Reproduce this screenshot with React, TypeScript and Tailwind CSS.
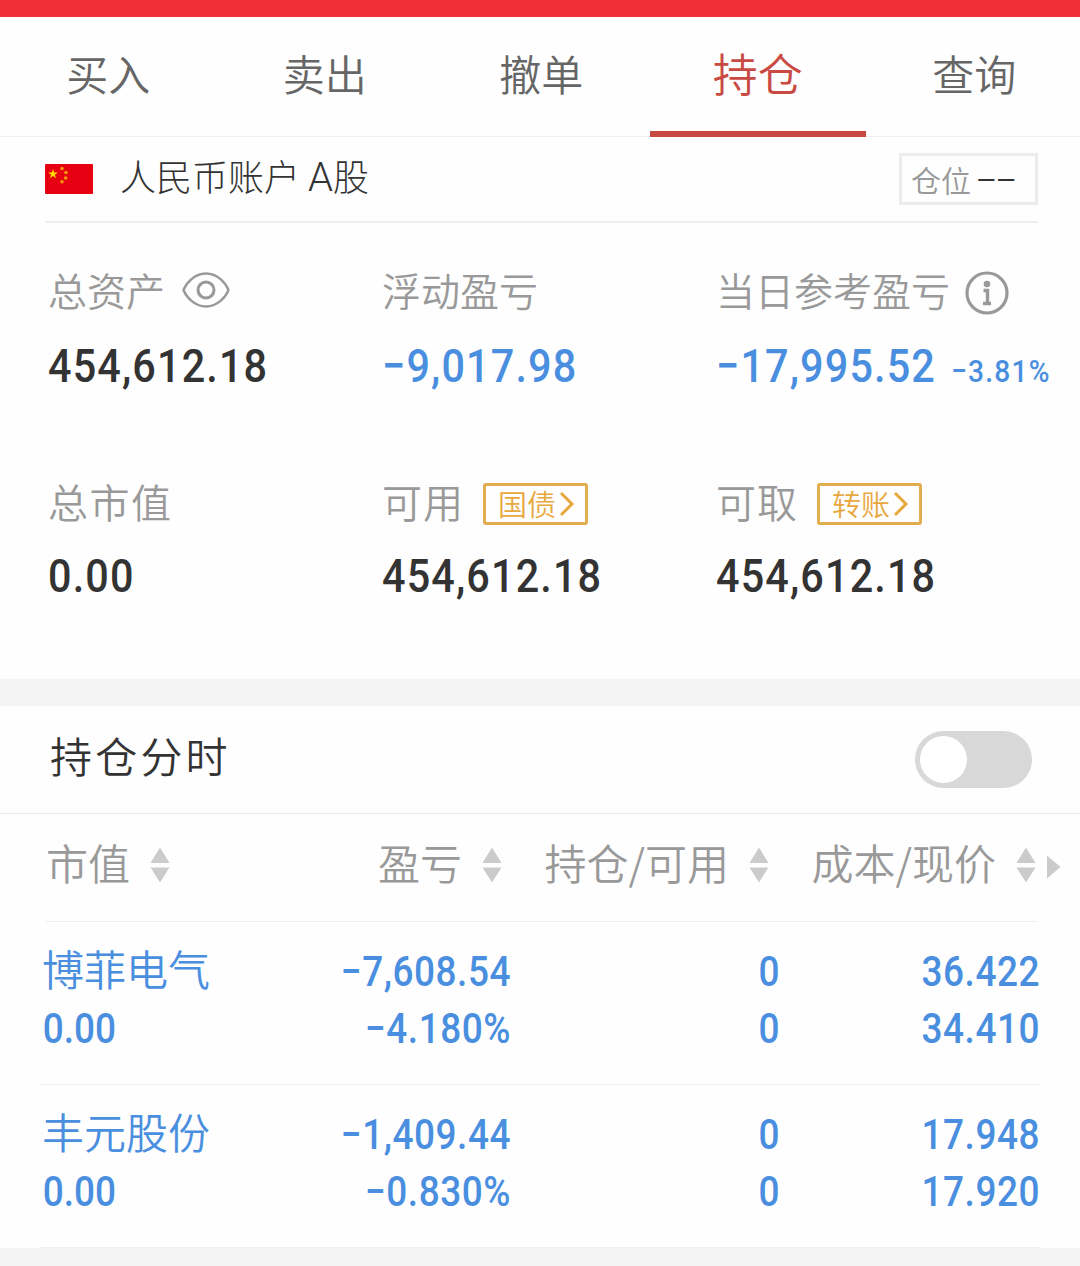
import { useState } from "react";

interface IHolding {
    name: string;
    value: string;
    profit: string;
    percent: string;
    held: string;
    usable: string;
    cost: string;
    price: string;
}

const TABS = ["买入", "卖出", "撤单", "持仓", "查询"];

const HOLDINGS: IHolding[] = [
    {
        name: "博菲电气",
        value: "0.00",
        profit: "−7,608.54",
        percent: "−4.180%",
        held: "0",
        usable: "0",
        cost: "36.422",
        price: "34.410",
    },
    {
        name: "丰元股份",
        value: "0.00",
        profit: "−1,409.44",
        percent: "−0.830%",
        held: "0",
        usable: "0",
        cost: "17.948",
        price: "17.920",
    },
];

const Flag = () => (
    <svg width="48" height="30" viewBox="0 0 48 30">
        <rect width="48" height="30" rx="1" fill="#e60012" />
        <path d="M8 5l1.2 3.5h3.7l-3 2.2 1.1 3.5-3-2.2-3 2.2 1.1-3.5-3-2.2h3.7z" fill="#ffd800" />
        <g fill="#f39a0b">
            <circle cx="17" cy="4.5" r="1.8" />
            <circle cx="21" cy="8.5" r="1.8" />
            <circle cx="20.7" cy="14" r="1.8" />
            <circle cx="17" cy="17.8" r="1.8" />
        </g>
    </svg>
);

const Eye = () => (
    <svg width="48" height="36" viewBox="0 0 48 36" fill="none" stroke="#999" strokeWidth="2.4">
        <path d="M1.5 18C4 11.500 12 1.500 24 1.500S44 11.500 46.500 18C44 24.500 36 34.500 24 34.500S4 24.500 1.500 18z" />
        <circle cx="24" cy="18" r="8" strokeWidth="3" />
    </svg>
);

const Info = () => (
    <svg width="44" height="44" viewBox="0 0 44 44" fill="none" stroke="#999">
        <circle cx="22" cy="22" r="20" strokeWidth="3.2" />
        <circle cx="22" cy="13" r="3.3" fill="#999" stroke="none" />
        <path d="M18.500 19.500h4V32M18 32.500h8" strokeWidth="3.4" />
    </svg>
);

const Sort = () => (
    <svg width="20" height="36" viewBox="0 0 20 36" fill="#cbcbcb">
        <path d="M10 .5L19.500 16H.5zM.5 20.500h19L10 35.500z" />
    </svg>
);

const Tag = ({ text }: { text: string }) => (
    <button className="mt-0.5 flex h-[42px] w-[105px] items-center rounded-[3px] border-3 border-[#e2ad4e] pl-[12px] text-[29px] leading-none text-[#e8a83e]">
        <span className="pb-0.5">{text}</span>
        <svg className="ml-[3px]" width="16" height="26" viewBox="0 0 16 26" fill="none" stroke="#e8a83e" strokeWidth="3">
            <path d="M2 2l11 11L2 24" />
        </svg>
    </button>
);

const Heading = ({ text }: { text: string }) => (
    <div className="flex items-center justify-end gap-5">
        <span className="pb-[6px]">{text}</span>
        <Sort />
    </div>
);

// condensed digits, squeezed towards the left edge
const Amount = ({ children }: { children: string }) => (
    <div className="origin-left scale-x-[0.88] font-['Roboto',sans-serif] text-[47px] leading-[50px] font-medium tracking-[1.3px]">
        {children}
    </div>
);

const Cell = ({ children, left }: { children: string; left?: boolean }) => (
    <span
        className={
            left
                ? "origin-left scale-x-[0.88] pl-[2px] text-left font-['Roboto',sans-serif] font-medium"
                : "origin-right scale-x-[0.88] font-['Roboto',sans-serif] font-medium tracking-[0.6px]"
        }
    >
        {children}
    </span>
);

const App = () => {
    const [active, setActive] = useState("持仓");

    return (
        <main className="h-[1266px] w-[1080px] overflow-hidden bg-[#fefefe] font-['Noto_Sans_CJK_SC',sans-serif] font-[350] text-[#333]">
            <div className="h-[17px] bg-[#f13035]" />
            <nav className="flex h-[120px] border-b border-[#eee]">
                {TABS.map((tab) => (
                    <button
                        key={tab}
                        onClick={() => setActive(tab)}
                        className={
                            tab === active
                                ? "-mb-px h-[120px] w-[216.5px] shrink-0 border-b-6 border-[#c94a43] pb-[3px] text-[45px] leading-none text-[#c94a43]"
                                : "w-[216.5px] shrink-0 pb-[7px] text-[42px] leading-none text-[#666]"
                        }
                    >
                        {tab}
                    </button>
                ))}
            </nav>

            <section className="h-[542px]">
                <div className="mr-[42px] ml-[45px] flex h-[86px] items-center border-b-2 border-[#eee]">
                    <Flag />
                    <span className="ml-[27px] pb-[4px] text-[36px] leading-none font-light">
                        人民币账户 <span className="font-['Roboto'] text-[40px]">A</span>股
                    </span>
                    <div className="ml-auto flex h-[52px] w-[139px] items-center border-3 border-[#ececec] pl-[9px] text-[30px] leading-none text-[#999]">
                        仓位<span className="ml-[6px] text-[34px] tracking-[1px] text-[#333]">−−</span>
                    </div>
                </div>
                <div className="grid grid-cols-[334px_334px_1fr] pl-[48px] whitespace-nowrap">
                    <div className="h-[210px] pt-[45px]">
                        <div className="mb-[23px] flex h-[50px] items-center text-[39px] leading-none text-[#999]">
                            <span className="pb-[7px]">总资产</span>
                            <span className="mb-[6px] ml-[17px]"><Eye /></span>
                        </div>
                        <Amount>454,612.18</Amount>
                    </div>
                    <div className="h-[210px] pt-[45px]">
                        <div className="mb-[23px] flex h-[50px] items-center pb-[7px] text-[39px] leading-none text-[#999]">浮动盈亏</div>
                        <div className="text-[#4a8fdf]"><Amount>−9,017.98</Amount></div>
                    </div>
                    <div className="h-[210px] pt-[45px]">
                        <div className="mb-[23px] flex h-[50px] items-center text-[39px] leading-none text-[#999]">
                            <span className="pb-[7px]">当日参考盈亏</span>
                            <span className="ml-[15px]"><Info /></span>
                        </div>
                        <div className="flex items-baseline text-[#4a8fdf]">
                            <div className="w-[235px]"><Amount>−17,995.52</Amount></div>
                            <span className="origin-left scale-x-[0.88] font-['Roboto',sans-serif] text-[32px] leading-none font-medium tracking-[1.4px]">−3.81%</span>
                        </div>
                    </div>
                    <div className="pt-[45px]">
                        <div className="mb-[23px] flex h-[50px] items-center pb-[5px] text-[40px] leading-none tracking-[1.5px] text-[#999]">总市值</div>
                        <Amount>0.00</Amount>
                    </div>
                    <div className="pt-[45px]">
                        <div className="mb-[23px] flex h-[50px] items-center text-[40px] leading-none text-[#999]">
                            <span className="mr-[19px] pb-[5px] tracking-[1px]">可用</span>
                            <Tag text="国债" />
                        </div>
                        <Amount>454,612.18</Amount>
                    </div>
                    <div className="pt-[45px]">
                        <div className="mb-[23px] flex h-[50px] items-center text-[40px] leading-none text-[#999]">
                            <span className="mr-[19px] pb-[5px] tracking-[1px]">可取</span>
                            <Tag text="转账" />
                        </div>
                        <Amount>454,612.18</Amount>
                    </div>
                </div>
            </section>

            <div className="h-[27px] bg-[#f4f4f4]" />

            <section className="flex h-[108px] items-center justify-between border-b border-[#ebebeb] pr-[48px] pl-[50px]">
                <h2 className="pb-[9px] text-[42px] leading-none font-[350] tracking-[3.2px]">持仓分时</h2>
                <button className="flex h-[57px] w-[117px] items-center rounded-full bg-[#d8d8d8] pl-[5px]">
                    <span className="size-[47px] rounded-full bg-white" />
                </button>
            </section>

            <section>
                <div className="mr-[43px] ml-[46px] grid h-[108px] grid-cols-[124px_332px_267px_267px] items-center border-b border-[#eee] pb-[5px] text-[42px] leading-none text-[#999]">
                    <Heading text="市值" />
                    <Heading text="盈亏" />
                    <Heading text="持仓/可用" />
                    <div className="flex items-center">
                        <div className="w-[267px] shrink-0"><Heading text="成本/现价" /></div>
                        <svg className="mt-1 ml-[10px] shrink-0" width="15" height="24" viewBox="0 0 15 24" fill="#cbcbcb">
                            <path d="M1 .5L14.500 12 1 23.500z" />
                        </svg>
                    </div>
                </div>
                {HOLDINGS.map((item) => (
                    <div
                        key={item.name}
                        className="mr-[39px] ml-[41px] grid h-[163px] grid-cols-[200px_270px_269px_260px] grid-rows-[57px_57px] border-b border-[#eee] pt-[21px] text-right text-[42px] leading-[57px] text-[#4a8fdf]"
                    >
                        <span className="-mt-[4px] pl-[1px] text-left">{item.name}</span>
                        <Cell>{item.profit}</Cell>
                        <Cell>{item.held}</Cell>
                        <Cell>{item.cost}</Cell>
                        <Cell left>{item.value}</Cell>
                        <Cell>{item.percent}</Cell>
                        <Cell>{item.usable}</Cell>
                        <Cell>{item.price}</Cell>
                    </div>
                ))}
            </section>

            <footer className="h-[18px] bg-[#f4f4f4]" />
        </main>
    );
};

export default App;
